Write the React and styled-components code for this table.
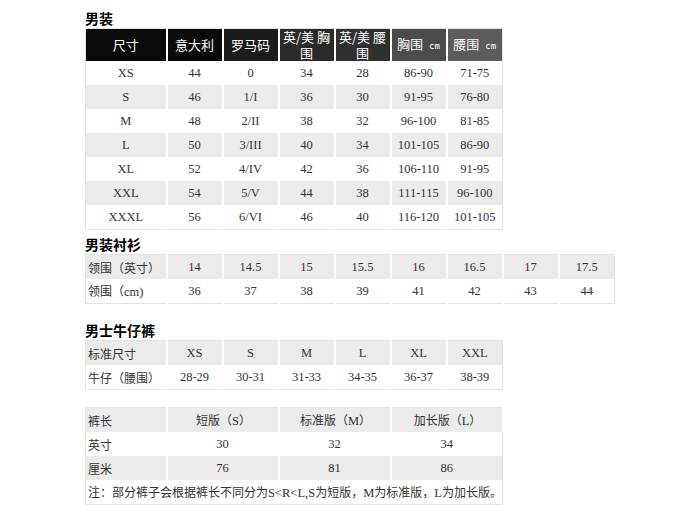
import React from 'react';
import styled, { createGlobalStyle } from 'styled-components';

const GlobalStyle = createGlobalStyle`
  html, body {
    margin: 0;
    padding: 0;
    background: #fff;
  }
  body {
    font-family: "Noto Sans CJK SC", "Liberation Sans", sans-serif;
    color: #333;
  }
`;

const Page = styled.div`
  padding: 9px 0 0 85px;
`;

const Title = styled.h3`
  margin: 0;
  height: 19px;
  font-size: 14px;
  line-height: 19px;
  font-weight: bold;
  color: #000;
  font-family: "Noto Sans CJK SC", sans-serif;
`;

const Table = styled.table`
  border-collapse: collapse;
  table-layout: fixed;
  width: ${(p) => p.w}px;
  border: 1px solid #e2e2e2;
  margin-bottom: ${(p) => p.mb || 0}px;
`;

const Head = styled.th`
  background: ${(p) => p.bg};
  color: #fff;
  font-weight: normal;
  font-size: 13px;
  line-height: 16px;
  height: 32px;
  padding: 0;
  text-align: center;
  border-right: 2px solid #fff;
  font-family: "Noto Sans CJK SC", sans-serif;
  &:last-child {
    border-right: none;
  }
`;

const HeadLine = styled.span`
  display: block;
  white-space: nowrap;
`;

const Unit = styled.span`
  font-family: "DejaVu Sans Mono", monospace;
  font-size: 9px;
  margin-left: 6px;
`;

const Row = styled.tr`
  background: ${(p) => (p.gray ? '#ebebeb' : '#fff')};
`;

const Cell = styled.td`
  height: 24px;
  padding: 0;
  text-align: center;
  font-family: "Liberation Serif", "Noto Sans CJK SC", serif;
  font-size: 12.5px;
  color: #333;
  border-right: 2px solid #fff;
  &:last-child {
    border-right: none;
  }
`;

const Label = styled.td`
  height: 24px;
  padding: 0 0 0 2px;
  text-align: ${(p) => (p.center ? 'center' : 'left')};
  font-family: "Noto Sans CJK SC", sans-serif;
  font-size: 12px;
  color: #333;
  border-right: 2px solid #fff;
  white-space: nowrap;
`;

const Latin = styled.span`
  font-family: "Liberation Serif", serif;
  font-size: 12.5px;
`;

const Note = styled.td`
  height: 24px;
  padding: 0 0 0 2px;
  font-family: "Noto Sans CJK SC", sans-serif;
  font-size: 12px;
  color: #333;
  white-space: nowrap;
`;

const Col = styled.col`
  width: ${(p) => p.w}px;
`;

const suitHeads = [
  { label: '尺寸', bg: '#0a0a0a', w: 81 },
  { label: '意大利', bg: '#0a0a0a', w: 56 },
  { label: '罗马码', bg: '#1c1c1c', w: 56 },
  { label: <><HeadLine>英/美 胸</HeadLine><HeadLine>围</HeadLine></>, bg: '#2a2a2a', w: 56 },
  { label: <><HeadLine>英/美 腰</HeadLine><HeadLine>围</HeadLine></>, bg: '#303030', w: 56 },
  { label: <>胸围<Unit>cm</Unit></>, bg: '#4b4b4b', w: 56 },
  { label: <>腰围<Unit>cm</Unit></>, bg: '#5c5c5c', w: 56 },
];

const suitRows = [
  ['XS', '44', '0', '34', '28', '86-90', '71-75'],
  ['S', '46', '1/I', '36', '30', '91-95', '76-80'],
  ['M', '48', '2/II', '38', '32', '96-100', '81-85'],
  ['L', '50', '3/III', '40', '34', '101-105', '86-90'],
  ['XL', '52', '4/IV', '42', '36', '106-110', '91-95'],
  ['XXL', '54', '5/V', '44', '38', '111-115', '96-100'],
  ['XXXL', '56', '6/VI', '46', '40', '116-120', '101-105'],
];

const shirtRows = [
  { label: '领围（英寸）', values: ['14', '14.5', '15', '15.5', '16', '16.5', '17', '17.5'] },
  { label: <>领围（<Latin>cm)</Latin></>, values: ['36', '37', '38', '39', '41', '42', '43', '44'] },
];

const jeansRows = [
  { label: '标准尺寸', values: ['XS', 'S', 'M', 'L', 'XL', 'XXL'] },
  { label: '牛仔（腰围）', values: ['28-29', '30-31', '31-33', '34-35', '36-37', '38-39'] },
];

const lengthRows = [
  { label: '英寸', values: ['30', '32', '34'] },
  { label: '厘米', values: ['76', '81', '86'] },
];

export default function App() {
  return (
    <Page>
      <GlobalStyle />
      <Title>男装</Title>
      <Table w={417} mb={5}>
        <colgroup>
          {suitHeads.map((h, i) => (
            <Col key={i} w={h.w} />
          ))}
        </colgroup>
        <thead>
          <tr>
            {suitHeads.map((h, i) => (
              <Head key={i} bg={h.bg}>
                {h.label}
              </Head>
            ))}
          </tr>
        </thead>
        <tbody>
          {suitRows.map((r, i) => (
            <Row key={i} gray={i % 2 === 1}>
              {r.map((v, j) => (
                <Cell key={j}>{v}</Cell>
              ))}
            </Row>
          ))}
        </tbody>
      </Table>

      <Title>男装衬衫</Title>
      <Table w={529} mb={17}>
        <colgroup>
          <Col w={81} />
          {shirtRows[0].values.map((_, i) => (
            <Col key={i} w={56} />
          ))}
        </colgroup>
        <tbody>
          {shirtRows.map((r, i) => (
            <Row key={i} gray={i === 0}>
              <Label>{r.label}</Label>
              {r.values.map((v, j) => (
                <Cell key={j}>{v}</Cell>
              ))}
            </Row>
          ))}
        </tbody>
      </Table>

      <Title>男士牛仔裤</Title>
      <Table w={417} mb={17}>
        <colgroup>
          <Col w={81} />
          {jeansRows[0].values.map((_, i) => (
            <Col key={i} w={56} />
          ))}
        </colgroup>
        <tbody>
          {jeansRows.map((r, i) => (
            <Row key={i} gray={i === 0}>
              <Label>{r.label}</Label>
              {r.values.map((v, j) => (
                <Cell key={j}>{v}</Cell>
              ))}
            </Row>
          ))}
        </tbody>
      </Table>

      <Table w={417}>
        <colgroup>
          <Col w={81} />
          <Col w={112} />
          <Col w={112} />
          <Col w={112} />
        </colgroup>
        <tbody>
          <Row gray>
            <Label>裤长</Label>
            <Label center>短版（<Latin>S</Latin>）</Label>
            <Label center>标准版（<Latin>M</Latin>）</Label>
            <Label center>加长版（<Latin>L</Latin>）</Label>
          </Row>
          {lengthRows.map((r, i) => (
            <Row key={i} gray={i === 1}>
              <Label>{r.label}</Label>
              {r.values.map((v, j) => (
                <Cell key={j}>{v}</Cell>
              ))}
            </Row>
          ))}
          <Row>
            <Note colSpan={4}>
              注：部分裤子会根据裤长不同分为<Latin>S&lt;R&lt;L,S</Latin>为短版，<Latin>M</Latin>为标准版，<Latin>L</Latin>为加长版。
            </Note>
          </Row>
        </tbody>
      </Table>
    </Page>
  );
}
